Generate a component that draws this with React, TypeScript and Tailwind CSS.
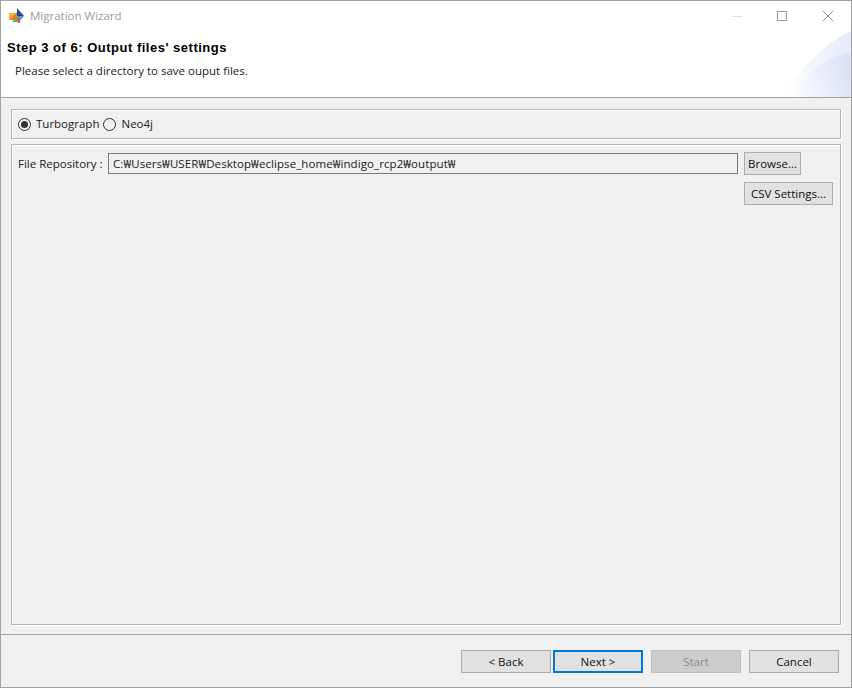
const uiFont = "font-['Open_Sans','Noto_Sans',sans-serif]";

const Radio = ({ label, checked }: { label: string; checked?: boolean }) => (
  <label className="flex items-center gap-[5px]">
    <span className="w-[13px] h-[13px] rounded-full border border-[#333333] bg-[#f0f0f0] flex items-center justify-center">
      {checked && <span className="w-[7px] h-[7px] rounded-full bg-[#333333]"></span>}
    </span>
    <span>{label}</span>
  </label>
);

const Button = ({ label, className }: { label: string; className: string }) => (
  <button className={`h-[23px] flex items-center justify-center bg-[#e1e1e1] text-[#111111] ${className}`}>
    {label}
  </button>
);

export default function App() {
  return (
    <div className={`w-[852px] h-[688px] flex flex-col border border-[#a3a3a3] bg-[#f0f0f0] text-[11.5px] leading-[16px] text-[#222222] ${uiFont}`}>
      <header className="relative h-[97px] shrink-0 bg-white border-b border-[#a0a0a0] overflow-hidden">
        <svg className="absolute right-0 bottom-0" width="73" height="66" viewBox="0 0 73 66">
          <defs>
            <linearGradient id="a" x1="0" x2="1" y1="0.6" y2="0.4">
              <stop offset="0" stopColor="#ffffff" />
              <stop offset="1" stopColor="#e8ecf8" />
            </linearGradient>
            <linearGradient id="b" x1="0" x2="1" y1="0.8" y2="0.6">
              <stop offset="0" stopColor="#ffffff" />
              <stop offset="1" stopColor="#dbe2f5" />
            </linearGradient>
          </defs>
          <path d="M0 66 C22 42 42 14 73 0 V66 Z" fill="url(#a)" />
          <path d="M8 66 C26 46 46 26 73 21 V66 Z" fill="url(#b)" />
        </svg>
        <div className="relative h-[30px] flex items-center pl-[8px]">
          <svg width="16" height="16" viewBox="0 0 16 16">
            <path d="M0 5 H8 V11 H0 Z" fill="#f9b233" />
            <path d="M0 12 L8 4 V12 Z" fill="#f4762d" />
            <path d="M3 14 L10 6 V14 Z" fill="#4fc04f" />
            <path d="M8 0 L15 8 H8 Z" fill="#1d4aa0" />
            <path d="M9 8 H15 L9 15 Z" fill="#35a4ee" />
            <path d="M8 9 H11 V15 H9 Z" fill="#ee4d78" />
          </svg>
          <span className="ml-[5px] text-[#9b9b9b]">Migration Wizard</span>
          <div className="ml-auto flex items-center pr-[18px] gap-[35px]">
            <span className="w-[10px] h-px bg-[#dedede]"></span>
            <span className="w-[10px] h-[10px] border border-[#999999]"></span>
            <svg className="ml-px" width="10" height="10" viewBox="0 0 10 10" stroke="#8c8c8c" strokeWidth="1">
              <path d="M0 0 L10 10 M10 0 L0 10" />
            </svg>
          </div>
        </div>
        <h1 className="relative ml-[6px] mt-[8px] text-[13px] leading-[18px] font-bold tracking-[0.5px] text-black font-['Liberation_Sans',sans-serif]">
          Step 3 of 6: Output files' settings
        </h1>
        <p className="relative ml-[14px] mt-[6px]">Please select a directory to save ouput files.</p>
      </header>

      <main className="flex-1 flex flex-col px-[10px] pt-[11px] pb-[9px] gap-[5px] min-h-0">
        <div className="h-[30px] shrink-0 flex items-center gap-[4px] pl-[6px] border border-[#b4b4b4] shadow-[inset_1px_1px_0_#ffffff,1px_1px_0_#ffffff]">
          <Radio label="Turbograph" checked />
          <Radio label="Neo4j" />
        </div>
        <div className="flex-1 flex flex-col border border-[#b4b4b4] pt-[7px] pr-[7px] pl-[6px] shadow-[inset_1px_1px_0_#ffffff,1px_1px_0_#ffffff]">
          <div className="flex items-center">
            <span className="w-[90px] shrink-0 whitespace-nowrap">File Repository :</span>
            <input
              readOnly
              value="C:₩Users₩USER₩Desktop₩eclipse_home₩indigo_rcp2₩output₩"
              className="w-[630px] h-[21px] px-[4px] border border-[#7a7a7a] bg-[#f0f0f0] text-[#222222] tracking-[0.08px] outline-none"
            />
            <Button label="Browse..." className="ml-[6px] w-[57px] border border-[#adadad]" />
          </div>
          <div className="flex justify-end mt-[7px]">
            <Button label="CSV Settings..." className="w-[89px] border border-[#adadad]" />
          </div>
        </div>
      </main>

      <footer className="h-[53px] shrink-0 flex items-start justify-end pt-[15px] pr-[12px] border-t border-[#a0a0a0]">
        <Button label="< Back" className="w-[90px] mr-[2px] border border-[#adadad]" />
        <Button label="Next >" className="w-[90px] mr-[8px] border-2 border-[#0078d7]" />
        <button className="w-[90px] h-[23px] mr-[8px] flex items-center justify-center border border-[#bfbfbf] bg-[#cccccc] text-[#8a8a8a]">
          Start
        </button>
        <Button label="Cancel" className="w-[90px] border border-[#adadad]" />
      </footer>
    </div>
  );
}
